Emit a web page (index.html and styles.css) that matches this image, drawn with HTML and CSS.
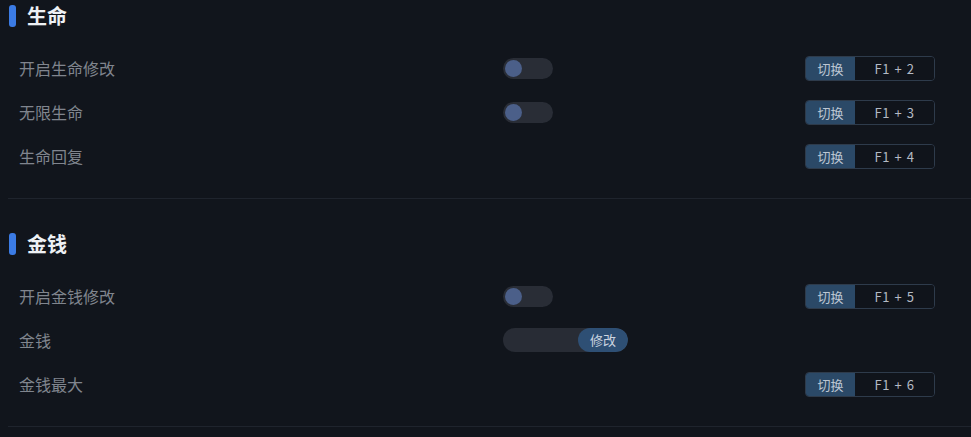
FILE: index.html
```html
<!DOCTYPE html>
<html lang="zh-CN">
<head>
<meta charset="utf-8">
<link rel="stylesheet" href="styles.css">
</head>
<body>
<div class="page">
  <section class="section section-first">
    <div class="section-head"><span class="bar"></span><h2 class="title">生命</h2></div>
    <div class="row">
      <span class="label">开启生命修改</span>
      <div class="ctrl"><span class="toggle"><span class="knob"></span></span></div>
      <div class="hotkey"><span class="hk-act">切换</span><span class="hk-key">F1 + 2</span></div>
    </div>
    <div class="row">
      <span class="label">无限生命</span>
      <div class="ctrl"><span class="toggle"><span class="knob"></span></span></div>
      <div class="hotkey"><span class="hk-act">切换</span><span class="hk-key">F1 + 3</span></div>
    </div>
    <div class="row">
      <span class="label">生命回复</span>
      <div class="ctrl"></div>
      <div class="hotkey"><span class="hk-act">切换</span><span class="hk-key">F1 + 4</span></div>
    </div>
  </section>
  <section class="section">
    <div class="section-head"><span class="bar"></span><h2 class="title">金钱</h2></div>
    <div class="row">
      <span class="label">开启金钱修改</span>
      <div class="ctrl"><span class="toggle"><span class="knob"></span></span></div>
      <div class="hotkey"><span class="hk-act">切换</span><span class="hk-key">F1 + 5</span></div>
    </div>
    <div class="row">
      <span class="label">金钱</span>
      <div class="ctrl"><div class="input"><span class="input-field"></span><span class="input-btn">修改</span></div></div>
      <div></div>
    </div>
    <div class="row">
      <span class="label">金钱最大</span>
      <div class="ctrl"></div>
      <div class="hotkey"><span class="hk-act">切换</span><span class="hk-key">F1 + 6</span></div>
    </div>
  </section>
</div>
</body>
</html>
```
FILE: styles.css
```css
html, body {
  margin: 0;
  padding: 0;
  background: #11151c;
}
body {
  font-family: "Noto Sans CJK SC", "Noto Sans", sans-serif;
  width: 971px;
  height: 437px;
  overflow: hidden;
}
.page {
  padding-left: 8px;
}
.section {
  padding: 34px 0 20px;
  border-bottom: 1px solid #1f242d;
}
.section-first {
  padding-top: 5px;
}
.section-head {
  display: flex;
  align-items: center;
  height: 22px;
  margin-bottom: 19px;
  padding-left: 1px;
}
.bar {
  width: 7px;
  height: 22px;
  border-radius: 3px;
  background: #3b7be4;
}
.title {
  margin: 0 0 0 11px;
  font-size: 20px;
  font-weight: 700;
  color: #eef1f5;
  line-height: 22px;
}
.row {
  display: grid;
  grid-template-columns: 484px 302px 130px;
  align-items: center;
  height: 44px;
  padding-left: 11px;
}
.label {
  font-size: 16px;
  color: #80858e;
  line-height: 20px;
}
.ctrl {
  display: flex;
  align-items: center;
}
.toggle {
  display: flex;
  align-items: center;
  width: 50px;
  height: 21px;
  border-radius: 11px;
  background: #292d36;
  padding-left: 2px;
  box-sizing: border-box;
}
.knob {
  width: 17px;
  height: 17px;
  border-radius: 50%;
  background: #4b5f89;
}
.input {
  display: flex;
  width: 125px;
  height: 24px;
  border-radius: 12px;
  background: #282c35;
  overflow: hidden;
}
.input-field {
  flex: 1;
}
.input-btn {
  width: 50px;
  border-radius: 12px;
  background: #2e4f74;
  color: #cdd5e0;
  font-size: 13px;
  line-height: 24px;
  text-align: center;
}
.hotkey {
  display: flex;
  width: 130px;
  height: 25px;
  box-sizing: border-box;
  border: 1px solid #2e3b4b;
  border-radius: 4px;
  overflow: hidden;
  font-size: 13px;
  line-height: 23px;
}
.hk-act {
  width: 49px;
  background: #2b4967;
  color: #bcc6d3;
  text-align: center;
}
.hk-key {
  flex: 1;
  color: #b4bac4;
  text-align: center;
  letter-spacing: 0.6px;
  word-spacing: 1px;
  background: #10141b;
}
```
